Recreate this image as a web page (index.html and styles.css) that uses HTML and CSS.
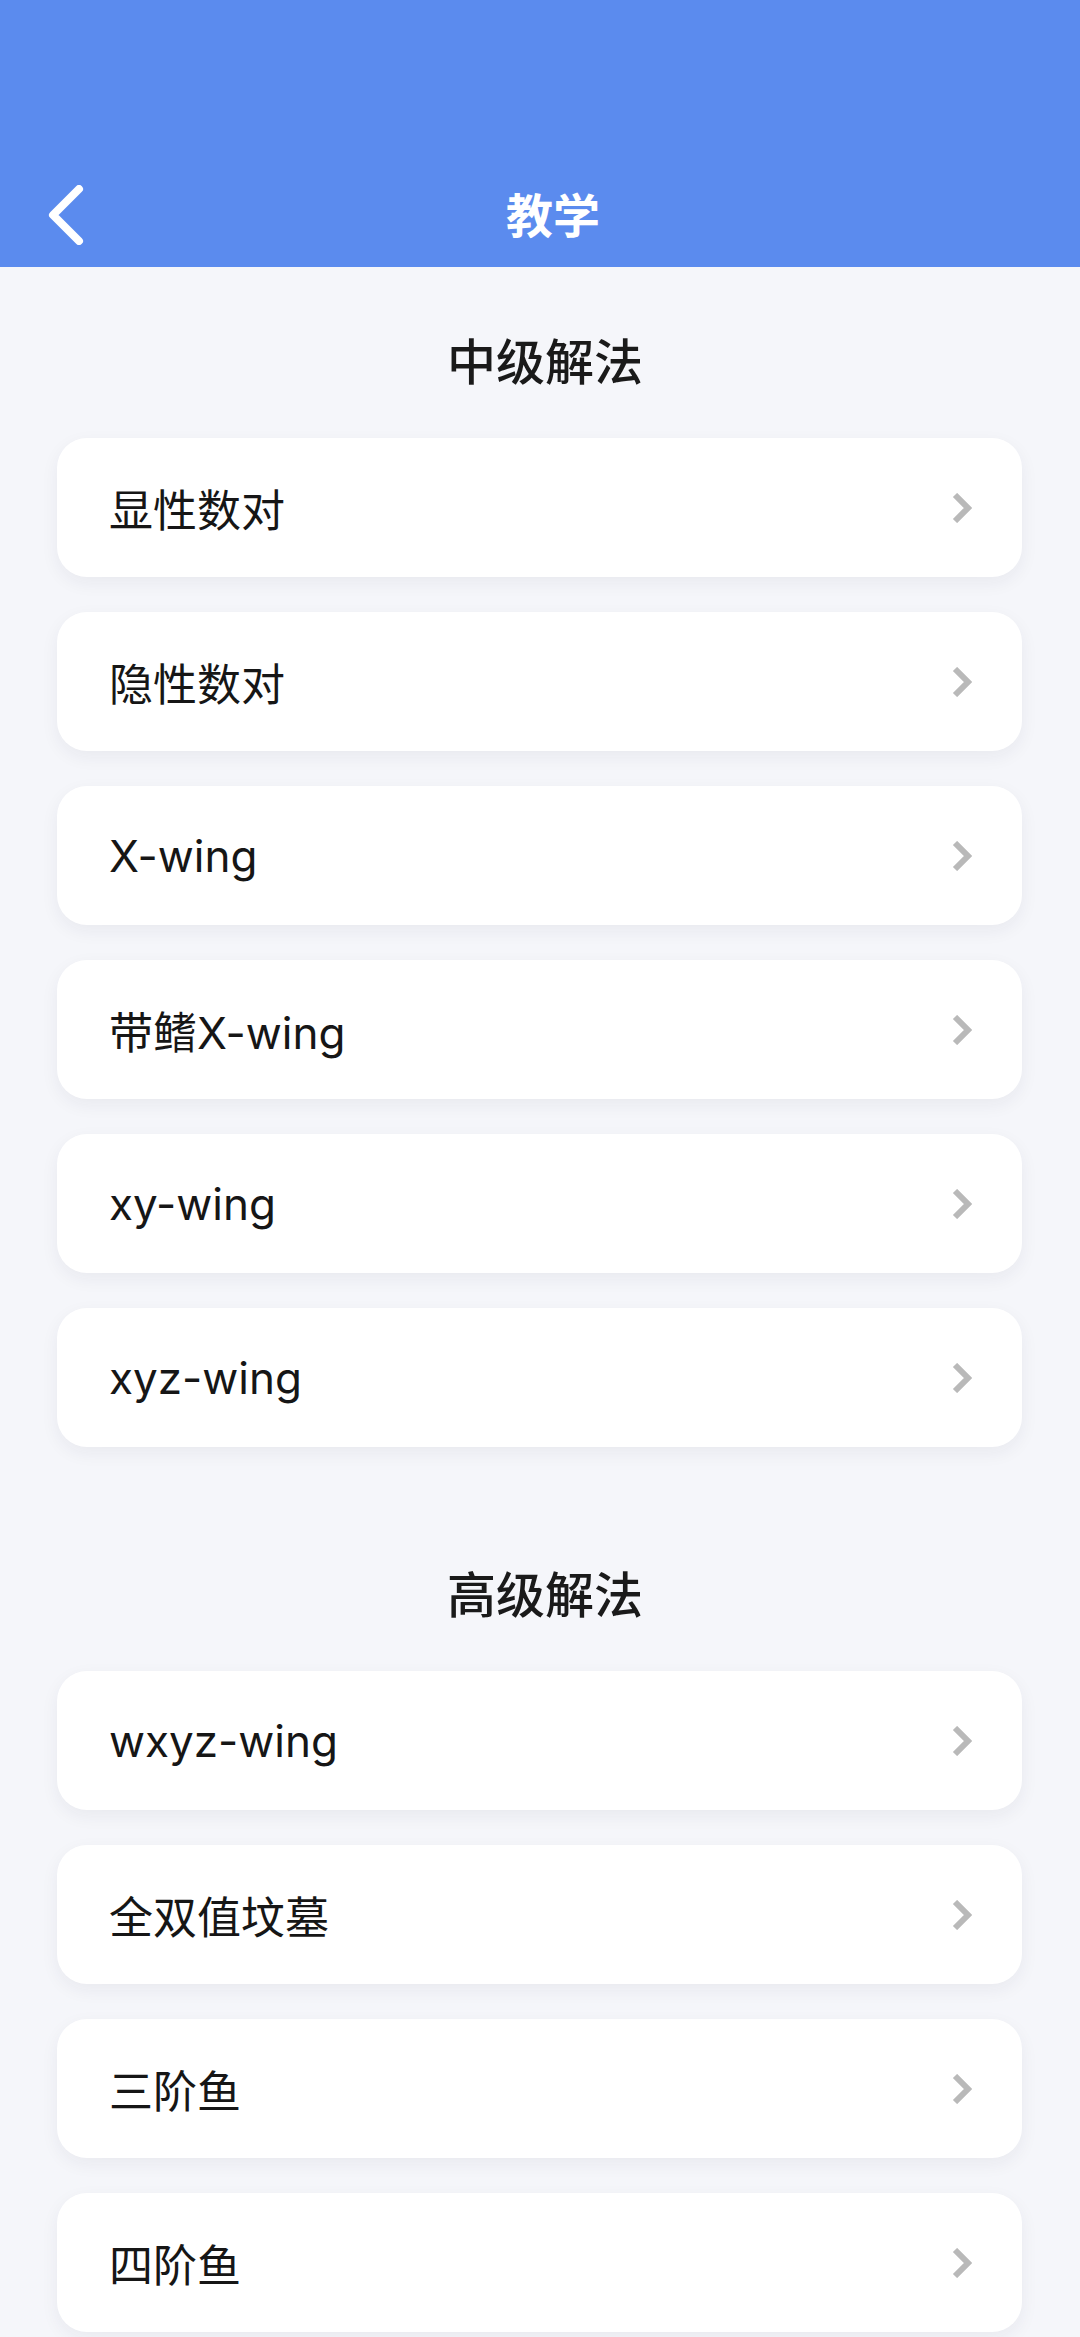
FILE: index.html
```html
<!DOCTYPE html>
<html lang="zh-CN">
<head>
  <meta charset="UTF-8">
  <meta name="viewport" content="width=device-width, initial-scale=1.0">
  <title>教学</title>
  <link rel="stylesheet" href="styles.css">
</head>
<body>
  <header class="top_bar">
    <div class="nav_row">
      <a href="#" class="back_btn" aria-label="返回">
        <svg width="40" height="60" viewBox="0 0 40 60">
          <path d="M32 4 L6 30 L32 56" fill="none" stroke="#fff" stroke-width="8" stroke-linecap="round" stroke-linejoin="round"/>
        </svg>
      </a>
      <h1 class="page_title">教学</h1>
    </div>
  </header>

  <main>
    <section class="section">
      <h2 class="section_title">中级解法</h2>
      <div class="card_list">
        <a href="#" class="card"><span>显性数对</span><svg class="arrow" viewBox="0 0 20 30"><path d="M3 2 L16 15 L3 28"/></svg></a>
        <a href="#" class="card"><span>隐性数对</span><svg class="arrow" viewBox="0 0 20 30"><path d="M3 2 L16 15 L3 28"/></svg></a>
        <a href="#" class="card"><span>X-wing</span><svg class="arrow" viewBox="0 0 20 30"><path d="M3 2 L16 15 L3 28"/></svg></a>
        <a href="#" class="card"><span>带鳍X-wing</span><svg class="arrow" viewBox="0 0 20 30"><path d="M3 2 L16 15 L3 28"/></svg></a>
        <a href="#" class="card"><span>xy-wing</span><svg class="arrow" viewBox="0 0 20 30"><path d="M3 2 L16 15 L3 28"/></svg></a>
        <a href="#" class="card"><span>xyz-wing</span><svg class="arrow" viewBox="0 0 20 30"><path d="M3 2 L16 15 L3 28"/></svg></a>
      </div>
    </section>

    <section class="section">
      <h2 class="section_title">高级解法</h2>
      <div class="card_list">
        <a href="#" class="card"><span>wxyz-wing</span><svg class="arrow" viewBox="0 0 20 30"><path d="M3 2 L16 15 L3 28"/></svg></a>
        <a href="#" class="card"><span>全双值坟墓</span><svg class="arrow" viewBox="0 0 20 30"><path d="M3 2 L16 15 L3 28"/></svg></a>
        <a href="#" class="card"><span>三阶鱼</span><svg class="arrow" viewBox="0 0 20 30"><path d="M3 2 L16 15 L3 28"/></svg></a>
        <a href="#" class="card"><span>四阶鱼</span><svg class="arrow" viewBox="0 0 20 30"><path d="M3 2 L16 15 L3 28"/></svg></a>
      </div>
    </section>
  </main>
</body>
</html>
```

FILE: styles.css
```css
body {
  margin: 0;
  background-color: #f5f6fa;
  font-family: Inter, "Noto Sans CJK SC", sans-serif;
  color: #1e1e1e;
}
.top_bar {
  height: 267px;
  background-color: #5b8bee;
  display: flex;
  flex-direction: column;
  justify-content: flex-end;
}
.nav_row {
  position: relative;
  height: 104px;
  display: flex;
  align-items: center;
  justify-content: center;
}
.back_btn {
  position: absolute;
  left: 47px;
  top: 22px;
  display: block;
  line-height: 0;
}
.page_title {
  margin: 0 0 6px 26px;
  font-size: 47px;
  font-weight: 700;
  color: #fff;
  font-family: "Noto Sans CJK SC", sans-serif;
}
.section {
  padding-top: 60px;
}
.section_title {
  margin: 0 0 47px 10px;
  text-align: center;
  font-size: 49px;
  line-height: 64px;
  font-weight: 500;
  color: #1a1a1a;
  font-family: "Noto Sans CJK SC", sans-serif;
}
.card_list {
  display: flex;
  flex-direction: column;
  gap: 35px;
  padding: 0 58px 53px 57px;
}
.card {
  height: 139px;
  box-sizing: border-box;
  display: flex;
  align-items: center;
  justify-content: space-between;
  padding: 0 50px 0 52px;
  background-color: #fff;
  border-radius: 30px;
  box-shadow: 0 6px 18px rgba(30, 40, 70, 0.06);
  text-decoration: none;
  color: #161616;
  font-size: 44px;
}
.arrow {
  width: 20px;
  height: 30px;
  fill: none;
  stroke: #b9b9b9;
  stroke-width: 6;
}
```
